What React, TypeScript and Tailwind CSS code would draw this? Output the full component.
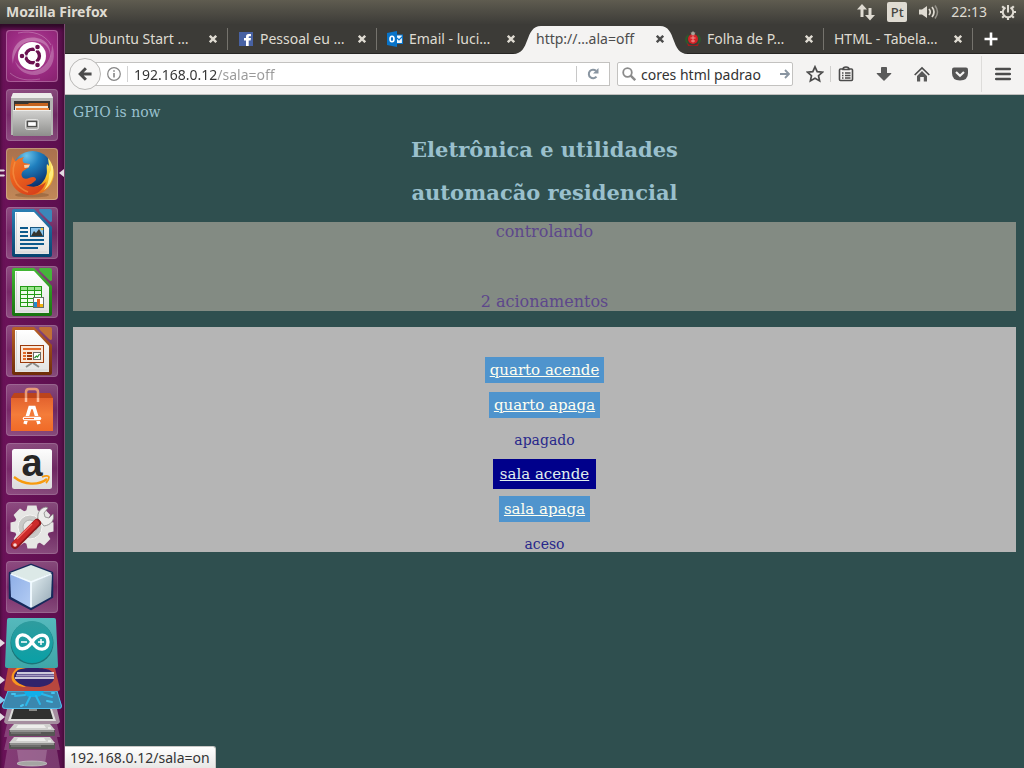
import type { ReactNode } from 'react';

/* ---------- Launcher icons ---------- */

function UbuntuIcon() {
  return (
    <svg viewBox="0 0 52 52" className="size-full" aria-hidden="true">
      <defs>
        <radialGradient id="dash" cx="0.5" cy="0.4" r="0.75">
          <stop offset="0" stopColor="#b8549b" />
          <stop offset="0.55" stopColor="#9c2c83" />
          <stop offset="1" stopColor="#87226f" />
        </radialGradient>
      </defs>
      <rect width="52" height="52" rx="4" fill="url(#dash)" />
      <rect x="0.5" y="0.5" width="51" height="51" rx="3.5" fill="none" stroke="#fff" opacity="0.25" />
      <path d="M7 34C3 17 15 5 31 8c11 2 15 12 13 20 1-10-6-17-17-17C15 11 8 21 7 34Z" fill="#fff" opacity="0.28" />
      <path d="M46 14c6 18-3 30-17 31-12 0-18-7-20-14 5 8 12 11 19 10 11-2 18-12 18-27Z" fill="#fff" opacity="0.25" />
      <path d="M12 3c14-3 27 1 33 12M4 43c8 7 18 8 30 6" fill="none" stroke="#fff" strokeWidth="1" opacity="0.25" />
      <circle cx="26" cy="26" r="14" fill="#fff" />
      <circle cx="26.5" cy="26" r="6.8" fill="none" stroke="#6b1150" strokeWidth="3.6" />
      <path d="M26.5 26 14 26M26.5 26l6-11M26.5 26l6 11" stroke="#fff" strokeWidth="1.2" />
      <circle cx="26.5" cy="26" r="5" fill="#fff" />
      <g fill="#6b1150" stroke="#fff" strokeWidth="1.2">
        <circle cx="16" cy="26" r="2.9" />
        <circle cx="31.5" cy="17" r="2.9" />
        <circle cx="31.5" cy="35" r="2.9" />
      </g>
    </svg>
  );
}

function FilesIcon() {
  return (
    <svg viewBox="0 0 52 52" className="size-full" aria-hidden="true">
      <defs>
        <linearGradient id="cab" x1="0" y1="0" x2="0" y2="1">
          <stop offset="0" stopColor="#d2d2d0" />
          <stop offset="1" stopColor="#8e8e8c" />
        </linearGradient>
      </defs>
      <path d="M7 4h38l2 5v37H5V9Z" fill="#b4b4b2" />
      <path d="M7 4h38l2 5H5Z" fill="#ececea" />
      <path d="M8 12h36v10H8Z" fill="#383632" />
      <path d="M9 15h13l1-1h19v8H9Z" fill="#c5641f" />
      <path d="M9 17h33v5H9Z" fill="#f4ead9" />
      <path d="M10 19h33v3H10Z" fill="#f18a3c" />
      <path d="M7 21h38v26H7Z" fill="url(#cab)" />
      <path d="M7 21.5h38" stroke="#ededeb" />
      <rect x="19.5" y="30.5" width="13" height="10" rx="2" fill="#b2b2b0" stroke="#e2e2e0" />
      <rect x="21.5" y="32.5" width="9" height="5" fill="#fff" stroke="#4f4f4d" strokeWidth="1.3" />
    </svg>
  );
}

function FirefoxIcon() {
  return (
    <svg viewBox="0 0 52 52" className="size-full" aria-hidden="true">
      <defs>
        <radialGradient id="globe" cx="0.35" cy="0.12" r="0.8">
          <stop offset="0" stopColor="#6cc3ea" />
          <stop offset="0.4" stopColor="#1f7fbe" />
          <stop offset="1" stopColor="#0b2f6b" />
        </radialGradient>
        <linearGradient id="fox" x1="0" y1="0" x2="0.6" y2="1">
          <stop offset="0" stopColor="#ef7d2c" />
          <stop offset="0.5" stopColor="#ea5f1e" />
          <stop offset="1" stopColor="#d8431a" />
        </linearGradient>
        <linearGradient id="tail" x1="0" y1="0" x2="0" y2="1">
          <stop offset="0" stopColor="#fff385" />
          <stop offset="0.5" stopColor="#fccb28" />
          <stop offset="1" stopColor="#e6601b" />
        </linearGradient>
        <linearGradient id="ffTile" x1="0" y1="0" x2="0" y2="1">
          <stop offset="0" stopColor="#a9714d" />
          <stop offset="1" stopColor="#c18858" />
        </linearGradient>
      </defs>
      <rect width="52" height="52" rx="4" fill="url(#ffTile)" />
      <rect x="0.5" y="0.5" width="51" height="51" rx="3.5" fill="none" stroke="#fff" opacity="0.25" />
      <ellipse cx="26" cy="47" rx="17" ry="2.5" fill="#6d4123" opacity="0.35" />
      <circle cx="26.5" cy="23" r="20" fill="url(#globe)" />
      <path d="M42 10c6 7 8 17 3 26-4 7-11 11-19 11l2-8c6-1 10-5 12-11 2-4 0-8 1-12l2 2Z" fill="url(#tail)" />
      <path d="m45 16 2 3v8c-1 6-4 12-9 15 4-6 5-10 5-16l2-4Z" fill="#fff28a" opacity="0.85" />
      <path d="M7 8c0 3 1 4 3 5 2-3 5-3 8-4-2 2-2 4 0 6l6 1-2 4-5 3c-2 2-2 5 0 7 4 2 7-1 10-1 2 0 3 1 3 3-3 3-6 5-10 5 6 3 14 2 20-3-3 8-9 13-16 13C12 47 4 37 4 27c0-8 1-14 3-19Z" fill="url(#fox)" />
      <path d="M9 14c-3 8-2 16 2 22 3 4 6 6 11 8" fill="none" stroke="#f8994a" strokeWidth="1.6" opacity="0.6" />
      <path d="m18 17 6-.5-1.500 3-4 .5Z" fill="#f7d3ac" />
    </svg>
  );
}

function DocumentShape({ id, dark, mid, light, children }: { id: string; dark: string; mid: string; light: string; children: ReactNode }) {
  return (
    <svg viewBox="0 0 52 52" className="size-full" aria-hidden="true">
      <defs>
        <linearGradient id={id} x1="0" y1="0" x2="0" y2="1">
          <stop offset="0" stopColor={mid} />
          <stop offset="1" stopColor={dark} />
        </linearGradient>
        <linearGradient id={`${id}-paper`} x1="0" y1="0" x2="0" y2="1">
          <stop offset="0" stopColor="#ffffff" />
          <stop offset="1" stopColor="#e3e3e3" />
        </linearGradient>
      </defs>
      <path d="M8 2h20l18 18v28q0 2-2 2H8q-2 0-2-2V4q0-2 2-2Z" fill={`url(#${id})`} />
      <path d="M9 5h19l15 16v26H9Z" fill={`url(#${id}-paper)`} />
      <path d="M10.500 6v39h31" fill="none" stroke="#d6d6d6" />
      <path d="M34 2h10q2 0 2 2v10q-1 2-3 0l-9-9q-2-2 0-3Z" fill={light} />
      {children}
    </svg>
  );
}

function WriterIcon() {
  return (
    <DocumentShape id="writer" dark="#06436f" mid="#2b7fb4" light="#3b87b9">
      <path d="M14 21h8M14 25h8M14 29h8M14 33h24M14 37h24M14 41h18" stroke="#0c5a8c" strokeWidth="2" />
      <rect x="24.5" y="20.5" width="13" height="9" fill="#8cc5ec" stroke="#195781" />
      <path d="m25 29 3-5 2 2 3-4 4 7Z" fill="#34342e" />
      <circle cx="36" cy="22" r="1.3" fill="#f3c63a" />
    </DocumentShape>
  );
}

function CalcIcon() {
  return (
    <DocumentShape id="calc" dark="#187210" mid="#43b834" light="#46b43b">
      <rect x="14" y="20" width="22" height="21" fill="#239b16" />
      <path d="M15 21h6v3h-6zM22 21h6v3h-6zM29 21h6v3h-6z" fill="#9be58d" />
      <path d="M15 25h6v3h-6zM22 25h6v3h-6zM29 25h6v3h-6zM15 29h6v3h-6zM22 29h6v3h-6zM29 29h6v3h-6zM15 33h6v3h-6zM22 33h6v3h-6zM15 37h6v3h-6zM22 37h6v3h-6z" fill="#effcec" />
      <rect x="27.5" y="31.5" width="10" height="10" fill="#fff" stroke="#66706a" />
      <path d="M28 36h3v5h-3z" fill="#218bd0" />
      <path d="M31 33h3v8h-3z" fill="#e8641e" />
      <path d="M34 38h3v3h-3z" fill="#efb411" />
    </DocumentShape>
  );
}

function ImpressIcon() {
  return (
    <DocumentShape id="impress" dark="#6e2c09" mid="#b96027" light="#c07037">
      <path d="m26 38-6 4M27 38l6 4" stroke="#8b8b88" strokeWidth="2" />
      <rect x="14.5" y="20.5" width="23" height="17" fill="#f9e8d9" stroke="#9b3a0c" />
      <path d="M17 24h18" stroke="#e26a28" strokeWidth="2" />
      <path d="M17 28h3M17 31h3M17 34h3" stroke="#e26a28" strokeWidth="1.8" />
      <path d="M21 28h5M21 31h5M21 34h5" stroke="#9b3a0c" strokeWidth="1.8" />
      <rect x="27.5" y="27.5" width="7" height="7" fill="#fff" stroke="#6b6b68" />
      <path d="m28.500 33 2-2 1 1 2-3" fill="none" stroke="#27922c" strokeWidth="1.2" />
    </DocumentShape>
  );
}

function SoftwareIcon() {
  return (
    <svg viewBox="0 0 52 52" className="size-full" aria-hidden="true">
      <defs>
        <linearGradient id="bag" x1="0" y1="0" x2="0" y2="1">
          <stop offset="0" stopColor="#e3632e" />
          <stop offset="0.5" stopColor="#f47c3a" />
          <stop offset="1" stopColor="#f06a27" />
        </linearGradient>
      </defs>
      <path d="M8 9h36l3 5H5Z" fill="#bc441b" />
      <path d="M20 14V8q0-3 3-3h6q3 0 3 3v6" fill="none" stroke="#e89a78" strokeWidth="2.5" />
      <path d="M5 14h42v33H5Z" fill="url(#bag)" />
      <path d="M20 18v-4M32 18v-4" stroke="#ffc0a0" strokeWidth="2.5" />
      <path d="m19 40 5-16.500h4L33 40" fill="none" stroke="#fff" strokeWidth="3.5" />
      <path d="M17 34.500h18" stroke="#f47c3a" strokeWidth="5" />
      <path d="M18.500 34.500h15" stroke="#fff" strokeWidth="3.5" strokeLinecap="round" />
      <path d="M18 34.500h10" stroke="#f26c2f" strokeWidth="1.2" />
    </svg>
  );
}

function AmazonIcon() {
  return (
    <svg viewBox="0 0 52 52" className="size-full overflow-visible" aria-hidden="true">
      <defs>
        <linearGradient id="amz" x1="0" y1="0" x2="0" y2="1">
          <stop offset="0" stopColor="#fdfdfd" />
          <stop offset="1" stopColor="#dcdcdc" />
        </linearGradient>
      </defs>
      <rect x="6" y="6" width="40" height="40" rx="2.5" fill="url(#amz)" />
      <text x="26" y="33" textAnchor="middle" fontFamily="'Liberation Sans', sans-serif" fontWeight="700" fontSize="38" fill="#262626">a</text>
      <path d="M8 34c10 8 24 9 33 2" fill="none" stroke="#f79a0e" strokeWidth="2.3" />
      <path d="M36 34c4-2 7-1 7 0s-1 4-3 6" fill="none" stroke="#f79a0e" strokeWidth="1.8" />
    </svg>
  );
}

const gearTeeth = [0, 45, 90, 135, 180, 225, 270, 315];

function SettingsIcon() {
  return (
    <svg viewBox="0 0 52 52" className="size-full" aria-hidden="true">
      <g fill="#e6e6e4">
        {gearTeeth.map((angle) => (
          <path key={angle} d="M20 10 21.500 3.500h9L32 10Z" transform={`rotate(${angle} 26 25)`} />
        ))}
        <circle cx="26" cy="25" r="17.5" />
      </g>
      <circle cx="24" cy="25" r="12" fill="#c9c9c7" stroke="#f5f5f3" />
      <circle cx="24" cy="25" r="7" fill="#e9e9e7" stroke="#b0b0ae" />
      <path d="m27 26 9-10" stroke="#8e8e8c" strokeWidth="7" />
      <path d="m27 26 9-10" stroke="#d8d8d6" strokeWidth="5.5" />
      <path d="M32 17c-1-6 2-11 8-12l2 1-4 5 1 4 4 1 4-4c2 6-2 11-9 12Z" fill="#ededeb" stroke="#888886" strokeWidth="0.8" />
      <path d="M9 43 31 21" stroke="#91171a" strokeWidth="8" strokeLinecap="round" />
      <path d="M9 42 30 21" stroke="#cc2a2a" strokeWidth="6" strokeLinecap="round" />
      <path d="m11 37 15-15" stroke="#ef6f69" strokeWidth="1.5" />
      <circle cx="9" cy="43" r="1.8" fill="#f5dad7" />
    </svg>
  );
}

function CubeIcon() {
  return (
    <svg viewBox="0 0 52 52" className="size-full" aria-hidden="true">
      <defs>
        <linearGradient id="cubeL" x1="0" y1="0" x2="1" y2="1">
          <stop offset="0" stopColor="#8eaee6" />
          <stop offset="1" stopColor="#b4cdf4" />
        </linearGradient>
        <linearGradient id="cubeR" x1="0" y1="0" x2="1" y2="1">
          <stop offset="0" stopColor="#e4eff2" />
          <stop offset="1" stopColor="#93a7b4" />
        </linearGradient>
      </defs>
      <path d="m25 4 21 8v24L25 48 4 37V12Z" fill="#16295b" stroke="#16295b" strokeWidth="2.5" strokeLinejoin="round" />
      <path d="m25 4 21 8-21 9L4 12Z" fill="#dce9e7" />
      <path d="m4 13 21 8v26L5 36Z" fill="url(#cubeL)" />
      <path d="m46 13-21 8v26l20-11Z" fill="url(#cubeR)" />
      <path d="m5 13 20 8 20-8M25 21v25" fill="none" stroke="#f2fbff" strokeWidth="1.8" />
    </svg>
  );
}

/* ---------- Icons folded at the foot of the launcher ---------- */

function ArduinoIcon() {
  return (
    <svg viewBox="0 0 56 50" className="h-[50px] w-14" aria-hidden="true">
      <defs>
        <linearGradient id="ard" x1="0" y1="0" x2="0" y2="1">
          <stop offset="0" stopColor="#55b9bc" />
          <stop offset="1" stopColor="#3fa6a8" />
        </linearGradient>
        <linearGradient id="ardDisc" x1="0" y1="0" x2="0" y2="1">
          <stop offset="0" stopColor="#2f9c9e" />
          <stop offset="1" stopColor="#0aa0a6" />
        </linearGradient>
      </defs>
      <path d="M5 0h45q2 0 2 2l2 46q0 2-2 2H3q-2 0-2-2L3 2q0-2 2-2Z" fill="url(#ard)" />
      <circle cx="28" cy="25" r="21.5" fill="#1b7478" />
      <circle cx="28" cy="24" r="21" fill="url(#ardDisc)" />
      <path d="M28 24C22 14 13 15 13 24s9 9 15 0 16-9 16 0-10 10-16 0Z" fill="none" stroke="#fff" strokeWidth="3.4" />
      <path d="M17 24h6M34 24h6M37 21v6" stroke="#fff" strokeWidth="1.5" />
    </svg>
  );
}

function EclipseIcon() {
  return (
    <svg viewBox="0 0 56 23" className="h-[23px] w-14" aria-hidden="true">
      <path d="M4 0h47l5 21q0 2-2 2H2q-2 0-2-2Z" fill="#b8473e" />
      <path d="M13 0h9C12 5 11 13 22 19 9 19 2 9 13 0Z" fill="#f9961f" />
      <path d="M14 2C20-1 42-1 47 3c7 6 3 16-16 16S5 8 14 2Z" fill="#31236b" />
      <path d="M13 5h37M11 10h39" stroke="#fff" strokeWidth="1.5" />
      <path d="M12 7.500h38" stroke="#a79ac2" strokeWidth="2" />
    </svg>
  );
}

function SplashIcon() {
  return (
    <svg viewBox="0 0 60 18" className="h-[18px] w-[60px]" aria-hidden="true">
      <path d="M6 0h49l5 15q0 3-3 3H3q-3 0-3-3Z" fill="#3b87ae" />
      <path d="M6 0h49l4.500 15q0 2.500-3 2.500H3.500q-3 0-3-2.500Z" fill="none" stroke="#4fc0ee" />
      <path d="M22 0h20q-1 5-7 6H27q-4-1-5-6Z" fill="#12aee8" />
      <path d="m23 4-10 1M28 6l-4 8M34 5l4 8M40 3l10 3" stroke="#2bb7ea" strokeWidth="2" strokeLinecap="round" />
      <path d="M10 3h3M45 10l5 1M19 15l2-1M50 2h2" stroke="#45c4ef" strokeWidth="2" strokeLinecap="round" />
    </svg>
  );
}

function MonitorIcon() {
  return (
    <svg viewBox="0 0 56 15" className="h-[15px] w-14" aria-hidden="true">
      <path d="M3 0h50l3 13-2 2H2l-2-2Z" fill="#a58e9f" />
      <path d="M8 0h40l4 12H4Z" fill="#dededc" />
      <path d="M10 0h36l3 10H7Z" fill="#30302f" />
      <path d="M25 1h8" stroke="#a8a8a6" strokeWidth="1.5" />
    </svg>
  );
}

function DriveIcon() {
  return (
    <svg viewBox="0 0 56 13" className="h-[13px] w-14" aria-hidden="true">
      <path d="M3 0h50l3 13H0Z" fill="#fff" opacity="0.2" />
      <path d="M10 0h36l5 6H5Z" fill="#d0d0ce" />
      <path d="M14 1h26l2 3H12Z" fill="#ededeb" />
      <rect x="5" y="6" width="46" height="6" rx="1" fill="#565654" />
      <path d="M6 7h44" stroke="#c9c9c7" />
      <path d="M7 9h30" stroke="#858583" />
      <path d="M44 4h3" stroke="#fff" />
    </svg>
  );
}

function TrashIcon() {
  return (
    <svg viewBox="0 0 56 18" className="h-[18px] w-14" aria-hidden="true">
      <path d="M3 0h50l3 18H0Z" fill="#fff" opacity="0.18" />
      <path d="M13 0h30l-2 14H15Z" fill="#fff" opacity="0.2" />
      <ellipse cx="28" cy="13.5" rx="15" ry="2.5" fill="#a5a5a3" stroke="#ccc" strokeWidth="0.7" />
    </svg>
  );
}

const launcherItems: { label: string; icon: ReactNode; focused?: boolean }[] = [
  { label: 'Ubuntu', icon: <UbuntuIcon /> },
  { label: 'Arquivos', icon: <FilesIcon /> },
  { label: 'Firefox', icon: <FirefoxIcon />, focused: true },
  { label: 'LibreOffice Writer', icon: <WriterIcon /> },
  { label: 'LibreOffice Calc', icon: <CalcIcon /> },
  { label: 'LibreOffice Impress', icon: <ImpressIcon /> },
  { label: 'Ubuntu Software', icon: <SoftwareIcon /> },
  { label: 'Amazon', icon: <AmazonIcon /> },
  { label: 'Configurações', icon: <SettingsIcon /> },
  { label: 'NetBeans', icon: <CubeIcon /> },
];

const foldedItems: { label: string; icon: ReactNode; marker?: string }[] = [
  { label: 'Arduino', icon: <ArduinoIcon />, marker: 'text-[#e4dbe2]' },
  { label: 'Eclipse', icon: <EclipseIcon />, marker: 'text-[#e4dbe2]' },
  { label: 'Editor', icon: <SplashIcon />, marker: 'text-[#86cdf0]' },
  { label: 'Monitor', icon: <MonitorIcon />, marker: 'text-[#e4dbe2]' },
  { label: 'Disco 1', icon: <DriveIcon /> },
  { label: 'Disco 2', icon: <DriveIcon /> },
  { label: 'Lixeira', icon: <TrashIcon /> },
];

function Launcher() {
  return (
    <nav aria-label="Launcher" className="flex w-[65px] shrink-0 flex-col items-center gap-[5px] border-r border-[#7d4a72] bg-linear-to-r from-[#6b1259] to-[#5c0f4e] pt-1.5 shadow-[inset_0_4px_4px_#2d0926]">
      <div className="flex flex-col gap-[7px]">
        {launcherItems.map((item) => (
          <button
            key={item.label}
            aria-label={item.label}
            className="relative size-[52px] rounded-[4px] bg-linear-to-b from-white/25 via-white/10 to-white/25 shadow-[inset_0_0_0_1px_rgba(255,255,255,0.15)]"
          >
            {item.icon}
            {item.focused && (
              <>
                <svg viewBox="0 0 5 8" className="absolute top-[21px] -left-1.5 h-2 w-[5px]" aria-hidden="true">
                  <path d="M0 .5h4l1 1-1 1H0zM0 5.500h4l1 1-1 1H0z" fill="#e4dbe2" />
                </svg>
                <svg viewBox="0 0 5 8" className="absolute top-[21px] -right-1.5 h-2 w-[5px]" aria-hidden="true">
                  <path d="M5 0v8L0 4z" fill="#e4dbe2" />
                </svg>
              </>
            )}
          </button>
        ))}
      </div>
      <div className="flex w-full flex-col">
        {foldedItems.map((item) => (
          <button key={item.label} aria-label={item.label} className="relative flex justify-center">
            {item.icon}
            {item.marker && (
              <svg viewBox="0 0 5 8" className={`absolute top-1/2 left-0 h-2 w-[5px] -translate-y-1/2 ${item.marker}`} aria-hidden="true">
                <path d="M0 0v8l5-4z" fill="currentColor" />
              </svg>
            )}
          </button>
        ))}
      </div>
    </nav>
  );
}

/* ---------- Top panel ---------- */

function TopPanel() {
  return (
    <header className="flex h-6 shrink-0 items-center bg-linear-to-b from-[#5f5c50] to-[#3d3c38] pr-[7px] pb-px pl-1.5 text-[14px] text-[#dfdbd2]">
      <h1 className="flex-1 font-bold">Mozilla Firefox</h1>
      <div className="flex items-center gap-3">
        <button aria-label="Rede">
          <svg viewBox="0 0 18 18" className="size-[18px]" fill="#dfdbd2" aria-hidden="true">
            <path d="M5 1 0 6.500h3.500V14h3V6.500H10ZM13 17.500 18 12h-3.500V5h-3v7H8Z" />
          </svg>
        </button>
        <button className="size-5 rounded-[2px] bg-[#dfdbd2] text-[13px] leading-5 font-medium text-[#45443f]">Pt</button>
        <button aria-label="Volume">
          <svg viewBox="0 0 20 16" className="h-4 w-5" fill="none" aria-hidden="true">
            <path d="M0 5.500h3L8 2v12L3 10.500H0Z" fill="#dfdbd2" />
            <path d="M10 5q2.500 3 0 6M13 3q4 5 0 10" stroke="#dfdbd2" strokeWidth="1.7" />
            <path d="M16 1.500q5 6.500 0 13" stroke="#95928a" strokeWidth="1.5" />
          </svg>
        </button>
        <time>22:13</time>
        <button aria-label="Sessão">
          <svg viewBox="0 0 18 18" className="size-[18px]" fill="none" stroke="#dfdbd2" aria-hidden="true">
            <path d="M6.500 4.500a5.200 5.200 0 1 0 5 0" strokeWidth="2" />
            <path d="M9 2v7.500" strokeWidth="2" />
            <path d="M3.800 9H1M17 9h-2.800M9 14.500V17M5 5 3.200 3.200M13 5l1.800-1.800M5 13l-1.800 1.800M13 13l1.800 1.800" strokeWidth="2.2" />
          </svg>
        </button>
      </div>
    </header>
  );
}

/* ---------- Tabs ---------- */

function FacebookIcon() {
  return (
    <svg viewBox="0 0 16 16" className="mr-1.5 size-4 shrink-0" aria-hidden="true">
      <rect x="1" y="1" width="14" height="14" fill="#4862a3" />
      <path d="M8 15V9.500H6V7h2V5.500Q8 3 10.500 3H13v2.300h-1.500q-.8 0-.8.800V7H13l-.4 2.500h-1.900V15Z" fill="#fff" />
    </svg>
  );
}

function OutlookIcon() {
  return (
    <svg viewBox="0 0 16 16" className="mr-1.5 size-4 shrink-0" aria-hidden="true">
      <path d="M0 2 10 0v16L0 14Z" fill="#0874c9" />
      <path d="M10 4h6v9h-6Z" fill="#eef6fc" />
      <path d="M10 4h5.500v8.500H10M10 7l2 2 4-4" fill="none" stroke="#0874c9" strokeWidth="1.2" />
      <ellipse cx="5" cy="8" rx="2" ry="2.7" fill="none" stroke="#fff" strokeWidth="1.6" />
    </svg>
  );
}

function CrestIcon() {
  return (
    <svg viewBox="0 0 16 16" className="mr-1.5 size-4 shrink-0" aria-hidden="true">
      <path d="M3.500 4Q-1 8 3 13M12.500 4q4.500 4 .5 9" fill="none" stroke="#2c5a2c" strokeWidth="2" />
      <path d="M2 12q6 5 12 0l-1 3H3Z" fill="#a3191c" />
      <circle cx="8" cy="8" r="5" fill="#d62226" />
      <path d="M8 4.500v7M5.500 7h5M6 10h4" stroke="#ef938e" />
      <path d="m8 0 .9 1.300 1.600.4-1 1.300v1.500L8 4l-1.500.5V3l-1-1.300 1.600-.4Z" fill="#a9a59a" />
    </svg>
  );
}

const tabs: { title: string; icon?: ReactNode; active?: boolean; divider?: boolean }[] = [
  { title: 'Ubuntu Start …', divider: true },
  { title: 'Pessoal eu …', icon: <FacebookIcon />, divider: true },
  { title: 'Email - luci…', icon: <OutlookIcon /> },
  { title: 'http://…ala=off', active: true },
  { title: 'Folha de P…', icon: <CrestIcon />, divider: true },
  { title: 'HTML - Tabela…', divider: true },
];

function TabStrip() {
  return (
    <div className="flex h-[30px] shrink-0 border-b border-[#262523] bg-[#3c3b37] pl-3.5 text-[14px] text-[#dfdbd2]">
      <div role="tablist" className="flex">
        {tabs.map((tab) => (
          <div key={tab.title} className={`relative flex w-[149px] items-center ${tab.active ? 'z-10 text-[#4c4c4c]' : ''}`}>
            {tab.active && (
              <svg viewBox="0 0 175 28" className="absolute top-0.5 -left-[13px] h-7 w-[175px]" aria-hidden="true">
                <path d="M0 28C18 28 11 0 28 0H147C164 0 157 28 175 28Z" fill="#f4f3f2" />
              </svg>
            )}
            <button role="tab" aria-selected={!!tab.active} className="relative flex h-full min-w-0 flex-1 items-center pl-2.5 text-left whitespace-nowrap">
              {tab.icon}
              {tab.title}
            </button>
            <button aria-label="Fechar aba" className="relative mr-2.5">
              <svg viewBox="0 0 8 8" className="size-2" fill="none" stroke="currentColor" strokeWidth="2.4" aria-hidden="true">
                <path d="m.8.800 6.400 6.400M7.200.8.800 7.200" />
              </svg>
            </button>
            <span className={`h-[22px] w-px ${tab.divider ? 'bg-[#75736d]' : ''}`} />
          </div>
        ))}
      </div>
      <button aria-label="Nova aba" className="ml-[11px]">
        <svg viewBox="0 0 14 14" className="size-3.5" fill="none" stroke="#fff" strokeWidth="2.6" aria-hidden="true">
          <path d="M7 .5v13M.5 7h13" />
        </svg>
      </button>
    </div>
  );
}

/* ---------- Navigation bar ---------- */

function NavBar() {
  return (
    <div className="flex h-[41px] shrink-0 items-center border-b border-[#c0bfbd] bg-[#f4f3f2] pl-1 text-[14px] text-[#333]">
      <button aria-label="Voltar" className="relative z-10 flex size-8 shrink-0 items-center justify-center rounded-full border border-[#b9b8b6] bg-[#f7f6f5]">
        <svg viewBox="0 0 16 16" className="size-3.5" fill="none" stroke="#4c4c4c" strokeWidth="3.4" aria-hidden="true">
          <path d="M9 1.500 2.500 8 9 14.500M3 8h12.500" />
        </svg>
      </button>
      <div className="-ml-2 flex h-6 flex-1 items-center border border-[#c3c2c0] bg-white pl-[13px]">
        <button aria-label="Informações do site">
          <svg viewBox="0 0 14 14" className="size-3.5" fill="none" stroke="#858585" aria-hidden="true">
            <circle cx="7" cy="7" r="6.3" strokeWidth="1.2" />
            <path d="M7 6v4.500M7 3.300v1.500" strokeWidth="1.6" />
          </svg>
        </button>
        <span className="mx-1.5 h-4 w-px bg-[#d2d2d2]" />
        <input
          aria-label="Endereço"
          defaultValue="192.168.0.12/sala=off"
          className="min-w-0 flex-1 bg-[linear-gradient(90deg,#333_83px,#999_83px)] bg-clip-text text-transparent caret-black outline-none"
        />
        <span className="h-4 w-px bg-[#c8c8c8]" />
        <button aria-label="Recarregar" className="mx-[10px]">
          <svg viewBox="0 0 12 12" className="size-3" fill="none" aria-hidden="true">
            <path d="M9.500 8.700A4.300 4.300 0 1 1 9 2.800" stroke="#8995a1" strokeWidth="2" />
            <path d="M11.500 0v5.500H6Z" fill="#8995a1" />
          </svg>
        </button>
      </div>
      <div className="ml-[7px] flex h-6 w-44 items-center rounded-[2px] border border-[#c3c2c0] bg-white pr-0.5 pl-1">
        <svg viewBox="0 0 14 14" className="size-3.5 shrink-0" fill="none" stroke="#8b8b8b" aria-hidden="true">
          <circle cx="5.500" cy="5.500" r="4.300" strokeWidth="1.8" />
          <path d="m8.700 8.700 4.500 4.500" strokeWidth="2.4" />
        </svg>
        <input aria-label="Pesquisar" defaultValue="cores html padrao" className="ml-[5px] min-w-0 flex-1 outline-none" />
        <button aria-label="Buscar">
          <svg viewBox="0 0 10 10" className="size-2.5" fill="none" stroke="#8995a1" strokeWidth="1.9" aria-hidden="true">
            <path d="M0 5h8.500M5 1l4 4-4 4" />
          </svg>
        </button>
      </div>
      <button aria-label="Favoritar" className="ml-[13px]">
        <svg viewBox="0 0 18 18" className="size-[18px]" fill="none" stroke="#4c4c4c" strokeWidth="1.7" aria-hidden="true">
          <path d="m9 1.800 2.200 4.900 5.200.5-3.900 3.500 1.100 5.200L9 13.200l-4.600 2.700 1.100-5.200-3.900-3.500 5.200-.5Z" />
        </svg>
      </button>
      <span className="mx-1.5 h-4 w-px bg-[#d0cfcd]" />
      <div className="flex items-center gap-[22px]">
        <button aria-label="Mostrar favoritos" className="ml-px">
          <svg viewBox="0 0 16 16" className="size-4" fill="none" stroke="#4c4c4c" strokeWidth="1.6" aria-hidden="true">
            <path d="M5 3H2.500q-1 0-1 1v9.500q0 1 1 1h11q1 0 1-1V4q0-1-1-1H11" />
            <path d="M5 3.500Q5 1 8 1t3 2.500ZM4 7h1.500M7 7h5.500M4 9.500h1.500M7 9.500h5.500M4 12h1.500M7 12h5.500" />
          </svg>
        </button>
        <button aria-label="Downloads">
          <svg viewBox="0 0 16 16" className="size-4" fill="#5a5a5a" stroke="#444" strokeWidth="0.8" aria-hidden="true">
            <path d="M5.500 1.500h5v6H15L8 14.500 1 7.500h4.500Z" />
          </svg>
        </button>
        <button aria-label="Página inicial">
          <svg viewBox="0 0 16 16" className="size-4" fill="#5a5a5a" aria-hidden="true">
            <path d="m8 5 5 5v5.500H9.800V11H6.200v4.500H3V10Z" />
            <path d="m.7 9 7.300-7 7.300 7" fill="none" stroke="#4c4c4c" strokeWidth="1.7" />
          </svg>
        </button>
        <button aria-label="Pocket">
          <svg viewBox="0 0 16 16" className="size-4" aria-hidden="true">
            <path d="M2 1.500h12q2 0 2 2V7q0 7.500-8 7.500T0 7V3.500q0-2 2-2Z" fill="#555" />
            <path d="m4 6 4 3.800L12 6" fill="none" stroke="#f4f3f2" strokeWidth="2.2" />
          </svg>
        </button>
      </div>
      <span className="ml-[13px] h-9 w-px bg-[#dddcda]" />
      <button aria-label="Menu" className="mx-[13px]">
        <svg viewBox="0 0 16 14" className="h-3.5 w-4" stroke="#4c4c4c" strokeWidth="2.6" strokeLinecap="round" aria-hidden="true">
          <path d="M1.200 2h13.600M1.200 7h13.600M1.200 12h13.600" />
        </svg>
      </button>
    </div>
  );
}

/* ---------- Web page ---------- */

function SwitchLink({ href, label }: { href: string; label: string }) {
  return (
    <a href={href} className="bg-[#4f94cd] px-[5px] text-[15px] leading-[26px] text-[#fffff0] underline">
      {label}
    </a>
  );
}

function WebPage() {
  return (
    <main className="flex-1 bg-[#2f4f4f] p-2 font-['DejaVu_Serif',serif] text-[#9ac0cd]">
      <p className="text-[14px] leading-[19px]">GPIO is now</p>
      <div className="mt-[15px] flex flex-col gap-[18px] text-center text-[21px] leading-[25px] font-bold">
        <h2>Eletrônica e utilidades</h2>
        <h2>automacão residencial</h2>
      </div>
      <section className="mt-[17px] flex flex-col gap-[51px] bg-[#838b83] text-center text-[16px] leading-[19px] text-[#5d478b]">
        <p>controlando</p>
        <p>2 acionamentos</p>
      </section>
      <section className="mt-4 flex flex-col items-center bg-[#b5b5b5] pt-[30px] text-[14px] leading-[15px] text-[#27278b]">
        <SwitchLink href="/quarto=on" label="quarto acende" />
        <div className="mt-[9px] flex flex-col items-center gap-[15px]">
          <SwitchLink href="/quarto=off" label="quarto apaga" />
          <p>apagado</p>
        </div>
        <a href="/sala=on" className="mt-[11px] bg-[#00008b] px-[7px] text-[15px] leading-[30px] text-[#e0eeee] underline">
          sala acende
        </a>
        <div className="mt-[7px] flex flex-col items-center gap-[15px]">
          <SwitchLink href="/sala=off" label="sala apaga" />
          <p>aceso</p>
        </div>
      </section>
    </main>
  );
}

export default function App() {
  return (
    <div className="flex min-h-screen flex-col font-['Noto_Sans',sans-serif]">
      <TopPanel />
      <div className="flex flex-1">
        <Launcher />
        <div className="relative flex min-w-0 flex-1 flex-col">
          <TabStrip />
          <NavBar />
          <WebPage />
          <div role="status" className="absolute bottom-0 left-0 h-[22px] rounded-tr-[3px] border-t border-r border-[#c8c7c5] bg-linear-to-b from-white to-[#e8e7e5] px-[5px] text-[14px] leading-[22px] text-[#333]">
            192.168.0.12/sala=on
          </div>
        </div>
      </div>
    </div>
  );
}
